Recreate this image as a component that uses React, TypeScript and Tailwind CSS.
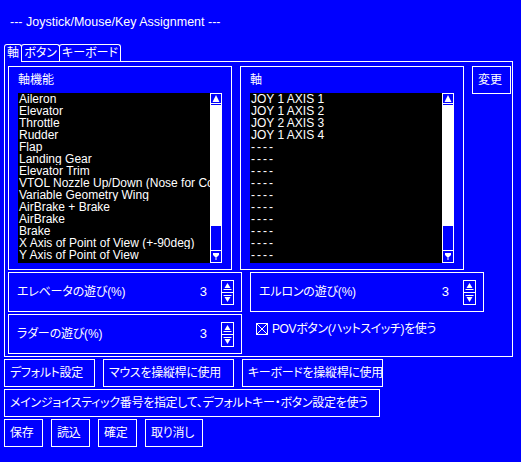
import React from 'react'

const functions = [
  'Aileron',
  'Elevator',
  'Throttle',
  'Rudder',
  'Flap',
  'Landing Gear',
  'Elevator Trim',
  'VTOL Nozzle Up/Down (Nose for Control)',
  'Variable Geometry Wing',
  'AirBrake + Brake',
  'AirBrake',
  'Brake',
  'X Axis of Point of View (+-90deg)',
  'Y Axis of Point of View',
]

const axes = [
  'JOY 1 AXIS 1',
  'JOY 1 AXIS 2',
  'JOY 2 AXIS 3',
  'JOY 1 AXIS 4',
  '----', '----', '----', '----', '----',
  '----', '----', '----', '----', '----',
]

// scrollbar arrows
const ScrollUp = () => (
  <svg width="10" height="11" viewBox="0 0 10 11">
    <path d="M5 1 L8.5 8 L1.5 8 Z" fill="white" />
    <rect x="0" y="9" width="10" height="1" fill="white" />
  </svg>
)

const ScrollDown = () => (
  <svg width="10" height="11" viewBox="0 0 10 11">
    <rect x="2" y="2" width="6" height="2" fill="white" />
    <path d="M2 4 L8 4 L5 7 Z" fill="white" />
    <rect x="4.5" y="7" width="1" height="2" fill="white" />
  </svg>
)

// spinner arrows
const SpinUp = () => (
  <svg width="11" height="11" viewBox="0 0 11 11">
    <path d="M5.5 2 L8.5 7 L2.5 7 Z" fill="white" />
    <rect x="1.5" y="8" width="8" height="1" fill="white" />
  </svg>
)

const SpinDown = () => (
  <svg width="11" height="11" viewBox="0 0 11 11">
    <rect x="1.5" y="2" width="8" height="1" fill="white" />
    <path d="M2.5 4 L8.5 4 L5.5 9 Z" fill="white" />
  </svg>
)

const ListBox = ({ items }: { items: string[] }) => (
  <div className="flex">
    <div className="w-[193px] h-[170px] bg-black overflow-hidden">
      {items.map((it, i) => (
        <div
          key={i}
          className={`h-[12px] leading-[12px] pl-[1px] text-[12px] whitespace-nowrap overflow-hidden ${it === '----' ? 'tracking-[2px]' : ''}`}
        >
          {it}
        </div>
      ))}
    </div>
    <div className="w-[12px] h-[170px] bg-white flex flex-col">
      <div className="h-[13px] border border-white bg-[#0000ff] flex items-center justify-center">
        <ScrollUp />
      </div>
      <div className="flex-1" />
      <div className="h-[25px] border-l border-r border-t border-white bg-[#0000ff]" />
      <div className="h-[13px] border border-white bg-[#0000ff] flex items-center justify-center">
        <ScrollDown />
      </div>
    </div>
  </div>
)

const GroupBox = ({ title, items }: { title: string; items: string[] }) => (
  <div className="w-[224px] h-[204px] border border-white px-[9px] pt-[6px]">
    <div className="h-[14px] leading-[14px] text-[12px] mb-[6px]">{title}</div>
    <ListBox items={items} />
  </div>
)

const SpinField = ({ label, value }: { label: string; value: number }) => (
  <div className="h-[40px] border border-white flex items-center pl-[8px] pr-[7px]">
    <span className="flex-1 text-[12px] tracking-[-0.2px]">{label}</span>
    <span className="text-[13px] mr-[14px]">{value}</span>
    <div className="flex flex-col w-[13px]">
      <div className="h-[13px] border border-white flex items-center justify-center">
        <SpinUp />
      </div>
      <div className="h-[13px] -mt-px border border-white flex items-center justify-center">
        <SpinDown />
      </div>
    </div>
  </div>
)

const Btn = ({ label, w }: { label: string; w: string }) => (
  <button className={`${w} h-[28px] border border-white pl-[5px] text-left text-[12px] tracking-[-0.3px] whitespace-nowrap`}>
    {label}
  </button>
)

export default function App() {
  return (
    <div className="w-[521px] h-[462px] bg-[#0000ff] text-white overflow-hidden font-['Liberation_Sans','Noto_Sans_CJK_JP',sans-serif] [font-feature-settings:'palt']">
      <div className="h-[44px] pt-[15px] pl-[10px] text-[12.5px] leading-[14px]">
        --- Joystick/Mouse/Key Assignment ---
      </div>

      {/* tabs */}
      <div className="ml-[4px] h-[17px] flex items-start text-[12px]">
        <div className="relative z-10 w-[18px] h-[18px] border-l border-t border-r border-white rounded-t-[3px] bg-[#0000ff] flex items-center justify-center pb-[1px]">
          軸
        </div>
        <div className="-ml-px w-[39px] h-[17px] border-l border-t border-r border-white rounded-t-[3px] flex items-center justify-center">
          ボタン
        </div>
        <div className="-ml-px w-[62px] h-[17px] border-l border-t border-r border-white rounded-t-[3px] flex items-center justify-center">
          キーボード
        </div>
      </div>

      {/* tab panel */}
      <div className="ml-[4px] w-[509px] h-[296px] border border-white pt-[4px] pl-[3px]">
        <div className="flex gap-[8px]">
          <GroupBox title="軸機能" items={functions} />
          <GroupBox title="軸" items={axes} />
          <button className="w-[39px] h-[28px] border border-white pl-[5px] text-left text-[12px]">変更</button>
        </div>
        <div className="mt-[2px] grid grid-cols-[234px_234px] gap-x-[8px] gap-y-[2px]">
          <SpinField label="エレベータの遊び(%)" value={3} />
          <SpinField label="エルロンの遊び(%)" value={3} />
          <SpinField label="ラダーの遊び(%)" value={3} />
          <div className="pt-[9px] pl-[6px] flex items-start gap-[4px] text-[12px]">
            <svg width="12" height="12" viewBox="0 0 12 12" className="shrink-0">
              <rect x="0.5" y="0.5" width="11" height="11" fill="none" stroke="white" />
              <path d="M1 1 L11 11 M11 1 L1 11" stroke="white" />
            </svg>
            <span className="leading-[12px] tracking-[-0.4px]">POVボタン(ハットスイッチ)を使う</span>
          </div>
        </div>
      </div>

      {/* bottom buttons */}
      <div className="mt-[2px] pl-[4px] flex flex-col gap-[2px]">
        <div className="flex gap-[8px]">
          <Btn label="デフォルト設定" w="w-[91px]" />
          <Btn label="マウスを操縦桿に使用" w="w-[131px]" />
          <Btn label="キーボードを操縦桿に使用" w="w-[141px]" />
        </div>
        <div className="flex">
          <Btn label="メインジョイスティック番号を指定して、デフォルトキー・ボタン設定を使う" w="w-[376px]" />
        </div>
        <div className="flex gap-[8px]">
          <Btn label="保存" w="w-[39px]" />
          <Btn label="読込" w="w-[39px]" />
          <Btn label="確定" w="w-[39px]" />
          <Btn label="取り消し" w="w-[58px]" />
        </div>
      </div>
    </div>
  )
}
